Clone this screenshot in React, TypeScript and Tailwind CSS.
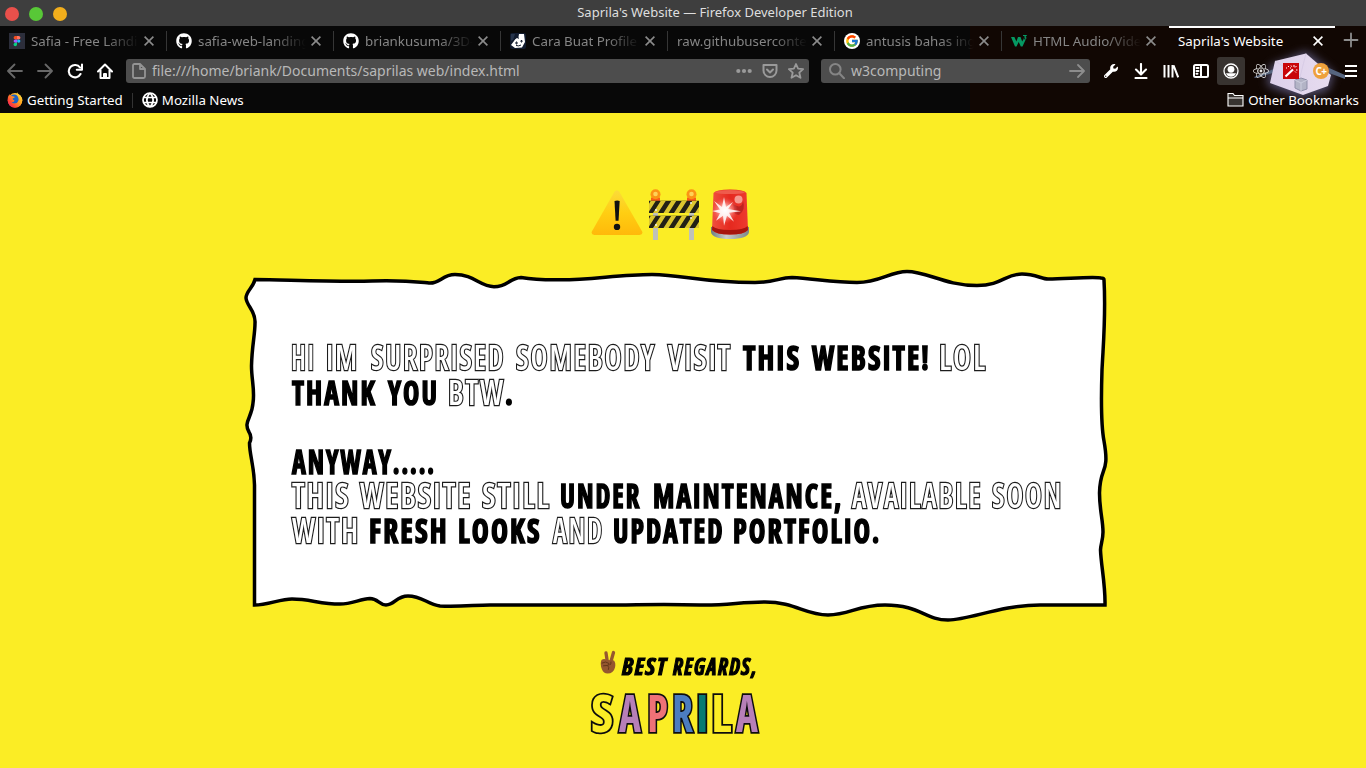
import React, { useLayoutEffect, useRef, useState } from "react";
import { FaGithub, FaReact, FaWrench } from "react-icons/fa";
import { FcGoogle } from "react-icons/fc";

/* ---------- lettering ---------- */

type Look = "outline" | "solid";

// Squeezes a word horizontally so that it fills the given width.
function Fit({ children, width, className }: { children: string; width: number; className: string }) {
  const ref = useRef<HTMLSpanElement>(null);
  const [scale, setScale] = useState(1);
  useLayoutEffect(() => {
    if (ref.current) setScale(width / ref.current.offsetWidth);
  }, [width]);
  return (
    <span className="block shrink-0 whitespace-nowrap" style={{ width }}>
      <span ref={ref} className={`inline-block origin-left ${className}`} style={{ transform: `scaleX(${scale})` }}>
        {children}
      </span>
    </span>
  );
}

const looks: Record<Look, string> = {
  outline: "font-semibold tracking-[2px] text-white [-webkit-text-stroke:2.4px_#1c1c1c] [paint-order:stroke_fill]",
  solid: "font-bold tracking-[2.5px] text-black [-webkit-text-stroke:1.6px_#000]",
};

type Word = [string, number, number, Look];

// word, left edge, right edge, look
const lines: Word[][] = [
  [
    ["HI", 291, 316, "outline"],
    ["IM", 326, 359, "outline"],
    ["SURPRISED", 371, 505, "outline"],
    ["SOMEBODY", 516, 656, "outline"],
    ["VISIT", 668, 732, "outline"],
    ["THIS", 743, 801, "solid"],
    ["WEBSITE!", 812, 931, "solid"],
    ["LOL", 939, 987, "outline"],
  ],
  [
    ["THANK", 292, 377, "solid"],
    ["YOU", 388, 439, "solid"],
    ["BTW", 448, 505, "outline"],
    [".", 505, 515, "solid"],
  ],
  [],
  [["ANYWAY.....", 292, 436, "solid"]],
  [
    ["THIS", 292, 350, "outline"],
    ["WEBSITE", 360, 472, "outline"],
    ["STILL", 482, 551, "outline"],
    ["UNDER", 560, 641, "solid"],
    ["MAINTENANCE,", 653, 843, "solid"],
    ["AVAILABLE", 852, 982, "outline"],
    ["SOON", 992, 1063, "outline"],
  ],
  [
    ["WITH", 292, 360, "outline"],
    ["FRESH", 369, 449, "solid"],
    ["LOOKS", 458, 542, "solid"],
    ["AND", 553, 604, "outline"],
    ["UPDATED", 613, 725, "solid"],
    ["PORTFOLIO.", 733, 881, "solid"],
  ],
];

function Line({ words }: { words: Word[] }) {
  let edge = 291;
  return (
    <p className="flex h-[34.5px]">
      {words.map(([text, left, right, look], i) => {
        const gap = left - edge;
        edge = right;
        return (
          <span key={i} style={{ marginLeft: gap }}>
            <Fit width={right - left} className={looks[look]}>{text}</Fit>
          </span>
        );
      })}
    </p>
  );
}

/* ---------- emoji ---------- */

function Warning() {
  return (
    <svg width="52" height="48" viewBox="0 0 52 50" preserveAspectRatio="none">
      <defs>
        <linearGradient id="wg" x1="0" y1="0" x2="0" y2="1">
          <stop offset="0" stopColor="#fbdc3a" />
          <stop offset="0.5" stopColor="#ffce12" />
          <stop offset="1" stopColor="#ffb90a" />
        </linearGradient>
      </defs>
      <path d="M23.5 2.8q2.3-3.2 4.8 0L51 44q1.500 3.500-2.500 3.900H3.400Q-.4 47.500 1 44Z" fill="url(#wg)" />
      <path d="M23.500 12.500q2.800-1.200 5.200 0l-1.200 20.500h-2.900Z" fill="#111" />
      <circle cx="26" cy="39.500" r="3.200" fill="#111" />
    </svg>
  );
}

function Barrier() {
  return (
    <svg width="52" height="52" viewBox="0 0 52 52">
      <path d="M5 23h5v28H5zM41 23h5v28h-5z" fill="#bfc1bb" />
      {[7.5, 43.5].map((x) => (
        <g key={x}>
          <path d={`M${x - 4.5} 12v-3.500h9V12Z`} fill="#fa5a17" />
          <circle cx={x} cy="5.300" r="5" fill="#fb9414" />
          <circle cx={x} cy="5" r="2.300" fill="#ffd257" />
        </g>
      ))}
      <clipPath id="bars"><path d="M1 11.700h50v12.300H1zM1 26.700h50v12.300H1z" /></clipPath>
      <g clipPath="url(#bars)">
        <path d="M0 11h52v29H0z" fill="#222016" />
        {[-5, 5, 15.5, 26, 36.5, 47].map((x) => (
          <path key={x} d={`M${x} 24l8-12.500h5l-8 12.500zM${x} 39l8-12.500h5l-8 12.500z`} fill="#dcc62f" />
        ))}
      </g>
      <g fill="#eee"><circle cx="8" cy="21" r="1" /><circle cx="43" cy="14" r="1" /><circle cx="8" cy="36" r="1" /><circle cx="43" cy="29" r="1" /></g>
    </svg>
  );
}

function Siren() {
  return (
    <svg width="40" height="51" viewBox="0 0 40 51">
      <defs>
        <linearGradient id="sr" x1="0" x2="1" y1="0" y2="0">
          <stop offset="0" stopColor="#f0503f" /><stop offset="0.5" stopColor="#e5291f" /><stop offset="1" stopColor="#ee3a2f" />
        </linearGradient>
        <linearGradient id="sb" x1="0" x2="1" y1="0" y2="0">
          <stop offset="0" stopColor="#6d7d80" /><stop offset="0.4" stopColor="#c9cccd" /><stop offset="1" stopColor="#7c8789" />
        </linearGradient>
        <radialGradient id="sg"><stop offset="0" stopColor="#fff" /><stop offset="0.3" stopColor="#ffd6d0" stopOpacity="0.85" /><stop offset="1" stopColor="#f66" stopOpacity="0" /></radialGradient>
      </defs>
      <path d="M1 38h38v5q-1 7-19 7T1 43Z" fill="url(#sb)" />
      <path d="M3.500 4q2-3.600 16.500-3.600T36.500 4l1.500 37q-4 4.500-18 4.500T2 41Z" fill="url(#sr)" />
      <path d="M2.300 37q4 4 17.700 4t17.700-4l.3 4q-4 4.500-18 4.500T2 41Z" fill="#a7150e" />
      <path d="M5 3.500q2-2.600 15-2.600t15 2.600q-3 1.500-15 1.500T5 3.500Z" fill="#ef5b4c" />
      <ellipse cx="28.500" cy="10.500" rx="4" ry="4" fill="#f59a90" />
      <path d="M23 15q9 6 10-3 3 9-4 14l-4-1Z" fill="#a51c1c" opacity=".65" />
      <circle cx="15" cy="21.500" r="13" fill="url(#sg)" />
      <path d="m14 8 2 10 7-5-5 7 13 2.200-12 1.500 5 9-7-6-3 10-1-10-7 5 4-7.500L2 22l8-1.500L4 12l8 6Z" fill="#fff" opacity=".85" />
    </svg>
  );
}

function Victory() {
  return (
    <svg width="20" height="26" viewBox="0 0 20 26">
      <g fill="none" stroke="#95572f" strokeLinecap="round" strokeWidth="3.300">
        <path d="M7 3 8.500 13" /><path d="M14.500 2.500 11.500 13" />
      </g>
      <path d="M2.500 10q2.500-1.800 5.500 0l7 .5q2 2.500 1 7-1.500 6-7.500 6-4 0-5.500-4Q.7 14 2.500 10Z" fill="#95572f" />
      <path d="M3 13q4-2.300 7 .5.500 2-2 2l-3.500.3M9 16q1.500 1.500.5 3.500M12 12q.3 2.500-1 3" fill="none" stroke="#633619" strokeLinecap="round" />
    </svg>
  );
}

/* ---------- torn paper ---------- */

function Paper() {
  return (
    <svg className="absolute inset-0" width="870" height="360" viewBox="240 265 870 360">
      <path
        d="M255 279.500C290 280 340 282 372 281S418 282 429 283C440 284 442 274.500 455 274.500C474 274.500 480 286.700 494 286.700C508 286.700 509 278 521 277.500C533 279.500 545 280 560 279.800C590 280 620 274.500 652 274.500C685 275 700 282.500 755 282.500C775 282.500 779 277.500 792 277.500C815 279 835 282.500 857 282.500C880 282.500 890 271.500 907 271.500C927 271.500 945 285.500 977 285.500C1002 285.500 1005 274 1022 274C1035 274 1042 279 1048 279C1070 278.500 1095 276.500 1101 278Q1104 278 1104 280C1106 315 1103.500 340 1102 370C1101 400 1101 425 1104 441C1110 475 1100 465 1099.500 493C1099.500 510 1103 520 1103 532C1103 540 1100.500 545 1100.500 550C1101 565 1105.500 585 1105 605L1040 605C1000 605 970 620 948 620C925 620 920 605 885 605C857 605 850 615 828 615C805 615 795 602 765 602C740 602 728 605.500 700 605C660 603.500 640 605 600 605L490 605C475 605 460 607 440 606C427 604 422 596 408 596C396 596 395 605 386 605C379 605 378 598.500 370 598.500C360 599 352 604 340 604C320 604 310 599 292 599C280 599 268 605 254.500 605L254.500 485C254 465 249.500 455 249.500 443C252 438 251 435 249 432C243 422 252 418 253 403C255 390 251.500 380 251.500 366C252 345 255 335 255 323C256 311 246.500 306 246 298C246 291 253 288 255 279.500Z"
        fill="#fff" stroke="#000" strokeWidth="3.500"
      />
    </svg>
  );
}

/* ---------- browser icons ---------- */

function Figma() {
  return (
    <svg width="16" height="16" viewBox="0 0 16 16">
      <path d="M0 0h16v16H0z" fill="#2c2e3b" />
      <path d="M8 3H6.300a1.700 1.700 0 0 0 0 3.400H8Z" fill="#f24e1e" /><path d="M8 3h1.700a1.700 1.700 0 0 1 0 3.400H8Z" fill="#ff7262" />
      <path d="M8 6.400H6.300a1.700 1.700 0 0 0 0 3.400H8Z" fill="#a259ff" /><circle cx="9.700" cy="8.100" r="1.700" fill="#1abcfe" />
      <path d="M8 9.800H6.300A1.700 1.700 0 1 0 8 11.500Z" fill="#0acf83" />
    </svg>
  );
}

function Face() {
  return (
    <svg width="16" height="16" viewBox="0 0 16 16">
      <rect width="16" height="16" rx="2" fill="#111b2e" />
      <path d="M7 1h7l1 8-3 5.500-7 .5-4-3 3-4 2-3Z" fill="#fff" />
      <path d="M6 1h3L8.500 4l.5 2-2-1-3 2Z" fill="#111b2e" /><path d="M6 9h1v2H6zM11 7.500h1V9h-1zM6 12.500q3 1 5-.5" stroke="#111b2e" fill="none" />
      <path d="M1 1h4L3 7 1 8Z" fill="#26344b" />
    </svg>
  );
}

function W3() {
  return (
    <svg width="17" height="16" viewBox="0 0 17 16">
      <path d="M0 4h3.400l2 4.500L7 4h2.500l1.700 4.500L12 7l2.500 0L11.500 13.500H9.800L7.700 9 5.500 13.500H4Z" fill="#059862" />
      <path d="M12 2.500h3L13.800 4q1.700.5.700 1.800-.8.800-2.300.2" fill="none" stroke="#059862" strokeWidth="1.200" />
    </svg>
  );
}

function Close({ active = false }: { active?: boolean }) {
  return (
    <svg className={active ? "text-white" : "text-[#8b8b8b]"} width="10" height="10" viewBox="0 0 10 10" stroke="currentColor" strokeWidth="1.600">
      <path d="m.6.6 8.800 8.800M9.400.6.6 9.400" />
    </svg>
  );
}

function Stroke({ d, className = "text-white", w = 2, fill = "none" }: { d: string; className?: string; w?: number; fill?: string }) {
  return (
    <svg className={className} width="16" height="16" viewBox="0 0 16 16" fill={fill} stroke="currentColor" strokeWidth={w} strokeLinecap="round" strokeLinejoin="round">
      <path d={d} />
    </svg>
  );
}

function Firefox() {
  return (
    <svg width="16" height="16" viewBox="0 0 16 16">
      <defs>
        <linearGradient id="ff" x1="1" y1="0" x2="0" y2="1">
          <stop offset="0" stopColor="#fff44f" /><stop offset=".4" stopColor="#ffa51e" /><stop offset=".75" stopColor="#ff4038" /><stop offset="1" stopColor="#e3128a" />
        </linearGradient>
      </defs>
      <circle cx="8" cy="8.300" r="7.300" fill="url(#ff)" />
      <circle cx="7.200" cy="7" r="4.500" fill="#1d62c4" />
      <path d="M10 0q.5 2 2 3 3.300 2 3.300 5.500A7.300 7.300 0 0 1 .7 8.500Q.7 4 2.500 2q0 1.700 1 2.300Q5 3.800 6.500 4.500L8 5 5.500 6.800q.5 1.500 2 1.400-.5 2.600-3 2 2.500 2.500 5.500 1 3-2 1.500-5.500Q9 3 10 0Z" fill="url(#ff)" />
    </svg>
  );
}

function Globe() {
  return <Stroke w={1.7} d="M8 1a7 7 0 1 0 0 14A7 7 0 0 0 8 1ZM1.500 5.500h13M1.500 10.500h13M8 1C3.800 5 3.800 11 8 15M8 1c4.200 4 4.200 10 0 14" />;
}

function Cube() {
  return (
    <svg className="absolute left-[1240px] top-[44px]" width="126" height="62" viewBox="0 0 126 62">
      <defs>
        <filter id="glow" x="-30%" y="-40%" width="160%" height="180%"><feGaussianBlur stdDeviation="5" /></filter>
        <linearGradient id="cube" x1="0" x2="1"><stop offset="0" stopColor="#dcd0ea" /><stop offset="1" stopColor="#e7dcef" /></linearGradient>
      </defs>
      <path d="M30 22 66 7l28 22-6 18-28 7-33-13Z" fill="#8080b8" filter="url(#glow)" opacity=".6" />
      <path d="M14 33 36 24v4l-21 6ZM89 24l16 7v4l-16-6Z" fill="#56657f" />
      <path d="M35 17 66 9.500 91 31l-3 11-25 9-33-12Z" fill="url(#cube)" />
      <path d="m35 17 25 16M66 9.500 60 33" stroke="#d2c7e2" strokeWidth=".7" />
      <path d="m55 36 6-2 6 2v9l-6 2-6-3Z" fill="#b3b4c6" stroke="#8f8fa9" /><path d="m55 36 6 3 6-3m-6 3v8" fill="none" stroke="#cccddd" />
    </svg>
  );
}

const tabs: { title: string; icon?: React.ReactNode }[] = [
  { title: "Safia - Free Landing", icon: <Figma /> },
  { title: "safia-web-landing", icon: <FaGithub className="size-4 text-white" /> },
  { title: "briankusuma/3D-", icon: <FaGithub className="size-4 text-white" /> },
  { title: "Cara Buat Profile", icon: <Face /> },
  { title: "raw.githubuserconte" },
  { title: "antusis bahas ingg", icon: <span className="flex size-4 items-center justify-center rounded-full bg-white"><FcGoogle className="size-[14px]" /></span> },
  { title: "HTML Audio/Video", icon: <W3 /> },
];

function Cell({ children, className = "" }: { children: React.ReactNode; className?: string }) {
  return <div className={`flex h-7 w-[30px] shrink-0 items-center justify-center ${className}`}>{children}</div>;
}

function Browser() {
  return (
    <header className="relative h-[113px] bg-[linear-gradient(to_right,#080808_970px,#110703_970px)] text-[13.33px] text-white">
      <div className="relative flex h-[26px] items-center gap-[10px] bg-[#3e3e3e] pl-[5px] pt-[2px]">
        <i className="size-[14px] rounded-full bg-[#ea504b]" />
        <i className="size-[14px] rounded-full bg-[#58c837]" />
        <i className="size-[14px] rounded-full bg-[#f2ae1c]" />
        <span className="absolute inset-x-0 top-[2px] pl-[64px] text-center text-[13px] leading-5 text-[#dedede]">Saprila's Website — Firefox Developer Edition</span>
      </div>
      <Cube />
      <div className="flex h-[30px]">
        {tabs.map((t, i) => (
          <div key={i} className="flex w-[167px] shrink-0 items-center pl-[9px]">
            {t.icon && <span className="mr-[6px] w-4 shrink-0">{t.icon}</span>}
            <span className={`${t.icon ? "w-[108px]" : "w-[130px]"} shrink-0 overflow-hidden whitespace-nowrap leading-5 text-[#858585] [mask-image:linear-gradient(to_right,#000_calc(100%-34px),transparent_100%)]`}>{t.title}</span>
            <span className="ml-[5px]"><Close /></span>
            {i < 6 && <i className="ml-auto h-5 w-px bg-[#363636]" />}
          </div>
        ))}
        <div className="flex w-[166px] shrink-0 items-center justify-between border-t-2 border-white pb-[2px] pl-[9px] pr-[12px]">
          <span className="leading-5">Saprila's Website</span>
          <Close active />
        </div>
        <div className="flex w-[31px] items-center justify-center pb-[2px] pl-px">
          <Stroke className="text-[#8d8d8d]" w={1.8} d="M8 1.500v13M1.500 8h13" />
        </div>
      </div>
      <div className="relative flex h-[30px] items-center">
        <Cell><Stroke className="text-[#686868]" w={1.8} d="M15 8H1.500m6-6.500L1 8l6.500 6.500" /></Cell>
        <Cell><Stroke className="text-[#686868]" w={1.8} d="M1 8h13.500m-6-6.500L15 8l-6.500 6.500" /></Cell>
        <Cell><Stroke w={2.1} d="M13.500 11A6.200 6.200 0 1 1 13 4.500M15 1.500v5.200H9.800" /></Cell>
        <Cell><Stroke w={2} d="m1 8.500 7-7 7 7M3.500 7v8h9V7M7 15v-4h2v4" /></Cell>
        <div className="ml-[6px] flex h-6 w-[683px] items-center rounded-[3px] bg-[#4d4d4d] px-[5px]">
          <Stroke className="text-[#949494]" w={1.8} d="M3.500 1H9l5 5v7.500q0 1.500-1.500 1.500h-9Q2 15 2 13.500v-11Q2 1 3.500 1ZM9 1v5h5" />
          <span className="ml-[5px] flex-1 text-[14px] leading-5 text-[#b8b8b8]">file:///home/briank/Documents/saprilas web/index.html</span>
          <span className="flex items-center gap-[10px]">
            <svg width="16" height="16" fill="#9a9a9a"><circle cx="2.300" cy="8" r="2.100" /><circle cx="8" cy="8" r="2.100" /><circle cx="13.700" cy="8" r="2.100" /></svg>
            <Stroke className="text-[#9a9a9a]" w={2} d="M1.500 2h13v5.500a6.500 6.500 0 0 1-13 0ZM5 6.500l3 3 3-3" />
            <Stroke className="text-[#9a9a9a]" w={1.8} d="m8 1 2.100 4.700 5 .5-3.800 3.500 1.200 5.100L8 12.200l-4.500 2.600 1.200-5.100L.9 6.200l5-.5Z" />
          </span>
        </div>
        <div className="ml-3 flex h-6 w-[269px] items-center rounded-[3px] bg-[#4d4d4d] pl-2 pr-[5px]">
          <Stroke className="text-[#858585]" w={2} d="M6.300 1a5.300 5.300 0 1 0 0 10.600A5.300 5.300 0 0 0 6.300 1Zm4 9.200 4.700 5" />
          <span className="ml-[6px] flex-1 text-[14px] leading-5 text-[#b8b8b8]">w3computing</span>
          <Stroke className="text-[#8d8d8d]" w={1.8} d="M1 8h13.500M9 2l6 6-6 6" />
        </div>
        <Cell className="ml-[6px]"><FaWrench className="size-[14px]" /></Cell>
        <Cell><Stroke w={2.1} d="M8 1v10M3 6.500 8 11.500l5-5M2.500 15h11" /></Cell>
        <Cell>
          <svg width="16" height="16" fill="none" stroke="#fff" strokeWidth="2"><path d="M1.500 2v12.500M5.500 2v12.500M9.500 2v12.500M10.500 2.300l4.700 12" /></svg>
        </Cell>
        <Cell><Stroke w={2} d="M2.500 2h11Q15 2 15 3.500v9q0 1.500-1.500 1.500h-11Q1 14 1 12.500v-9Q1 2 2.500 2ZM8 2v12M3.500 5h2M3.500 8h2M3.500 10.700h1" /></Cell>
        <Cell>
          <span className="flex size-7 shrink-0 items-center justify-center rounded-[3px] bg-[#383330]">
            <svg width="16" height="16" viewBox="0 0 16 16"><circle cx="8" cy="8" r="7" fill="none" stroke="#fff" strokeWidth="1.300" /><circle cx="8" cy="6.300" r="3.400" fill="#fff" /><path d="M3 10.200h10Q11.500 13.800 8 13.800t-5-3.600Z" fill="#fff" /></svg>
          </span>
        </Cell>
        <Cell><FaReact className="size-4 text-[#e4e4e4]" /></Cell>
        <Cell>
          <svg width="16" height="16" viewBox="0 0 16 16"><path d="M0 0h16v16H0z" fill="#c90508" /><path d="m2.500 13.500 7.500-7" stroke="#fff" strokeWidth="2.200" /><path d="M11 2v2M13 7h1.500M12 4.500l1.500-1.500M8 2.500l.7 1.200M12 8.500l1 1M5 3l1 1M3 5h1M7 5h1" stroke="#fff" /></svg>
        </Cell>
        <Cell><span className="flex size-4 items-center justify-center rounded-full bg-[#eea13c] text-[10px] font-bold leading-none tracking-[-0.5px]">C+</span></Cell>
        <Cell>
          <svg width="16" height="16" stroke="#fff" strokeWidth="2"><path d="M2 3h12M2 8h12M2 13h12" /></svg>
        </Cell>
      </div>
      <div className="relative flex h-[27px] items-center pb-px pl-[7px] pr-[7px] pt-[2px]">
        <Firefox />
        <span className="ml-[4px] leading-5">Getting Started</span>
        <i className="ml-[9px] h-[15px] w-px bg-[#333]" />
        <span className="ml-[9px]"><Globe /></span>
        <span className="ml-[4px] flex-1 leading-5">Mozilla News</span>
        <svg width="17" height="16" viewBox="0 0 17 16"><path d="M1 14V1.500h5l1.500 2H16V14Z" fill="#383330" stroke="#fff" strokeWidth="1.100" /><path d="M1 6h15" stroke="#fff" /></svg>
        <span className="ml-[4px] leading-5">Other Bookmarks</span>
      </div>
    </header>
  );
}

const signature: [string, number, number, string][] = [
  ["S", 22, 0, "text-[#fbed25]"],
  ["A", 22, 6, "text-[#b77fb8]"],
  ["P", 21, 6, "text-[#ee7277]"],
  ["R", 21, 4, "text-[#4c7dc0]"],
  ["I", 13, 3, "text-[#087b72]"],
  ["L", 21, 2, "text-[#fbed25]"],
  ["A", 22, 4, "text-[#b77fb8]"],
];

export default function App() {
  return (
    <div className="h-[768px] w-[1366px] overflow-hidden bg-[#fbed25] font-['Noto_Sans','Liberation_Sans',sans-serif]">
      <Browser />
      <main className="flex flex-col">
        <div className="flex h-[152px] items-start pl-[591px] pt-[76px]">
          <Warning />
          <span className="ml-[5px]"><Barrier /></span>
          <span className="ml-[10px]"><Siren /></span>
        </div>
        <section className="relative ml-[240px] h-[360px] w-[870px] pl-[51px] pt-[75px]">
          <Paper />
          <div className="relative font-['Open_Sans','Noto_Sans',sans-serif] text-[33.5px] leading-[34.5px] [font-stretch:75%]">
            {lines.map((words, i) => <Line key={i} words={words} />)}
          </div>
        </section>
        <footer className="font-['Open_Sans','Noto_Sans',sans-serif] font-bold [font-stretch:75%]">
          <div className="flex pl-[599px] pt-[25px]">
            <Victory />
            <div className="ml-[3px] mt-[3px] flex gap-[6px] text-[22.500px] italic leading-[28px]">
              <Fit width={45} className="tracking-[1.5px] [-webkit-text-stroke:1.1px_#000]">BEST</Fit>
              <Fit width={85} className="tracking-[1.5px] [-webkit-text-stroke:1.1px_#000]">REGARDS,</Fit>
            </div>
          </div>
          <div className="flex pl-[591px] pt-px text-[51px] leading-[60px]">
            {signature.map(([c, w, gap, color], i) => (
              <span key={i} style={{ marginLeft: gap }}>
                <Fit width={w} className={`[-webkit-text-stroke:3.6px_#0d0d0d] [paint-order:stroke_fill] ${color}`}>{c}</Fit>
              </span>
            ))}
          </div>
        </footer>
      </main>
    </div>
  );
}
